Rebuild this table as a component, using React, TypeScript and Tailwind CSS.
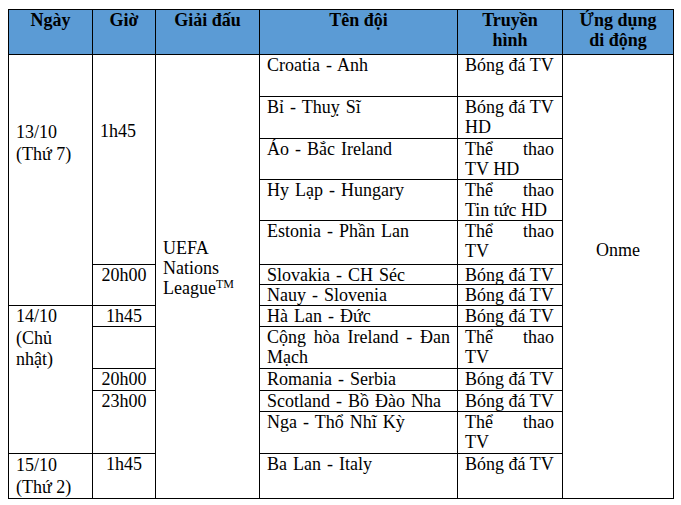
const cell = "border-r border-b border-black overflow-visible";

type Match = {
  r: string;
  team: string[];
  tv: string[];
  teamJ?: boolean;
  tvJ?: boolean;
};

const matches: Match[] = [
  { r: "row-start-2", team: ["Croatia - Anh"], tv: ["Bóng đá TV"] },
  { r: "row-start-3", team: ["Bỉ - Thuỵ Sĩ"], tv: ["Bóng đá TV", "HD"] },
  { r: "row-start-4", team: ["Áo - Bắc Ireland"], tv: ["Thể thao", "TV HD"], tvJ: true },
  { r: "row-start-5", team: ["Hy Lạp - Hungary"], tv: ["Thể thao", "Tin tức HD"], tvJ: true },
  { r: "row-start-6", team: ["Estonia - Phần Lan"], tv: ["Thể thao", "TV"], tvJ: true },
  { r: "row-start-7", team: ["Slovakia - CH Séc"], tv: ["Bóng đá TV"] },
  { r: "row-start-8", team: ["Nauy - Slovenia"], tv: ["Bóng đá TV"] },
  { r: "row-start-9", team: ["Hà Lan - Đức"], tv: ["Bóng đá TV"] },
  { r: "row-start-10", team: ["Cộng hòa Ireland - Đan", "Mạch"], teamJ: true, tv: ["Thể thao", "TV"], tvJ: true },
  { r: "row-start-11", team: ["Romania - Serbia"], tv: ["Bóng đá TV"] },
  { r: "row-start-12", team: ["Scotland - Bồ Đào Nha"], tv: ["Bóng đá TV"] },
  { r: "row-start-13", team: ["Nga - Thổ Nhĩ Kỳ"], tv: ["Thể thao", "TV"], tvJ: true },
  { r: "row-start-14", team: ["Ba Lan - Italy"], tv: ["Bóng đá TV"] },
];

const Lines = ({ lines, justify }: { lines: string[]; justify?: boolean }) => (
  <>
    {lines.map((l, i) => (
      <div
        key={i}
        className={
          i === 0 && justify
            ? "whitespace-nowrap text-justify [text-align-last:justify]"
            : "whitespace-nowrap"
        }
      >
        {l}
      </div>
    ))}
  </>
);

const App = () => {
  return (
    <div className="min-h-screen bg-white pl-[8px] pt-[9px] font-serif text-[18px] leading-[20px] text-black">
      <div className="grid w-max grid-cols-[84px_63px_104px_198px_105px_111px] grid-rows-[45px_42px_42px_41px_41px_44px_20px_21px_21px_42px_22px_21px_42px_45px] border-l border-t border-black font-[family-name:Liberation_Serif,serif]">
        {/* Header */}
        <div className={`${cell} col-start-1 row-start-1 bg-[#5b9bd5] text-center font-bold`}>Ngày</div>
        <div className={`${cell} col-start-2 row-start-1 bg-[#5b9bd5] text-center font-bold`}>Giờ</div>
        <div className={`${cell} col-start-3 row-start-1 bg-[#5b9bd5] text-center font-bold`}>Giải đấu</div>
        <div className={`${cell} col-start-4 row-start-1 bg-[#5b9bd5] text-center font-bold`}>Tên đội</div>
        <div className={`${cell} col-start-5 row-start-1 bg-[#5b9bd5] text-center font-bold`}>
          <div>Truyền</div>
          <div>hình</div>
        </div>
        <div className={`${cell} col-start-6 row-start-1 bg-[#5b9bd5] text-center font-bold`}>
          <div>Ứng dụng</div>
          <div>di động</div>
        </div>

        {/* Ngày */}
        <div className={`${cell} col-start-1 row-start-2 row-end-9 pl-[7px] pt-[66px] leading-[22px]`}>
          <div>13/10</div>
          <div>(Thứ 7)</div>
        </div>
        <div className={`${cell} col-start-1 row-start-9 row-end-14 pl-[7px] leading-[21.5px]`}>
          <div>14/10</div>
          <div>(Chủ</div>
          <div>nhật)</div>
        </div>
        <div className={`${cell} col-start-1 row-start-14 row-end-15 pl-[7px] leading-[22px]`}>
          <div>15/10</div>
          <div>(Thứ 2)</div>
        </div>

        {/* Giờ */}
        <div className={`${cell} col-start-2 row-start-2 row-end-7 pl-[7px] pt-[66px]`}>1h45</div>
        <div className={`${cell} col-start-2 row-start-7 row-end-9 text-center`}>20h00</div>
        <div className={`${cell} col-start-2 row-start-9 row-end-10 text-center`}>1h45</div>
        <div className={`${cell} col-start-2 row-start-10 row-end-11`}></div>
        <div className={`${cell} col-start-2 row-start-11 row-end-12 text-center`}>20h00</div>
        <div className={`${cell} col-start-2 row-start-12 row-end-14 text-center`}>23h00</div>
        <div className={`${cell} col-start-2 row-start-14 row-end-15 text-center`}>1h45</div>

        {/* Giải đấu */}
        <div className={`${cell} col-start-3 row-start-2 row-end-15 pl-[7px] pt-[183px]`}>
          <div>UEFA</div>
          <div>Nations</div>
          <div>
            League<sup className="text-[12px]">TM</sup>
          </div>
        </div>

        {/* Tên đội + Truyền hình */}
        {matches.map((m) => (
          <div key={`t-${m.r}`} className={`${cell} col-start-4 ${m.r} px-[7px] [word-spacing:1.5px]`}>
            <Lines lines={m.team} justify={m.teamJ} />
          </div>
        ))}
        {matches.map((m) => (
          <div key={`v-${m.r}`} className={`${cell} col-start-5 ${m.r} pl-[7px] pr-[8px]`}>
            <Lines lines={m.tv} justify={m.tvJ} />
          </div>
        ))}

        {/* Ứng dụng di động */}
        <div className={`${cell} col-start-6 row-start-2 row-end-15 pt-[185px] text-center`}>Onme</div>
      </div>
    </div>
  );
};

export default App;
